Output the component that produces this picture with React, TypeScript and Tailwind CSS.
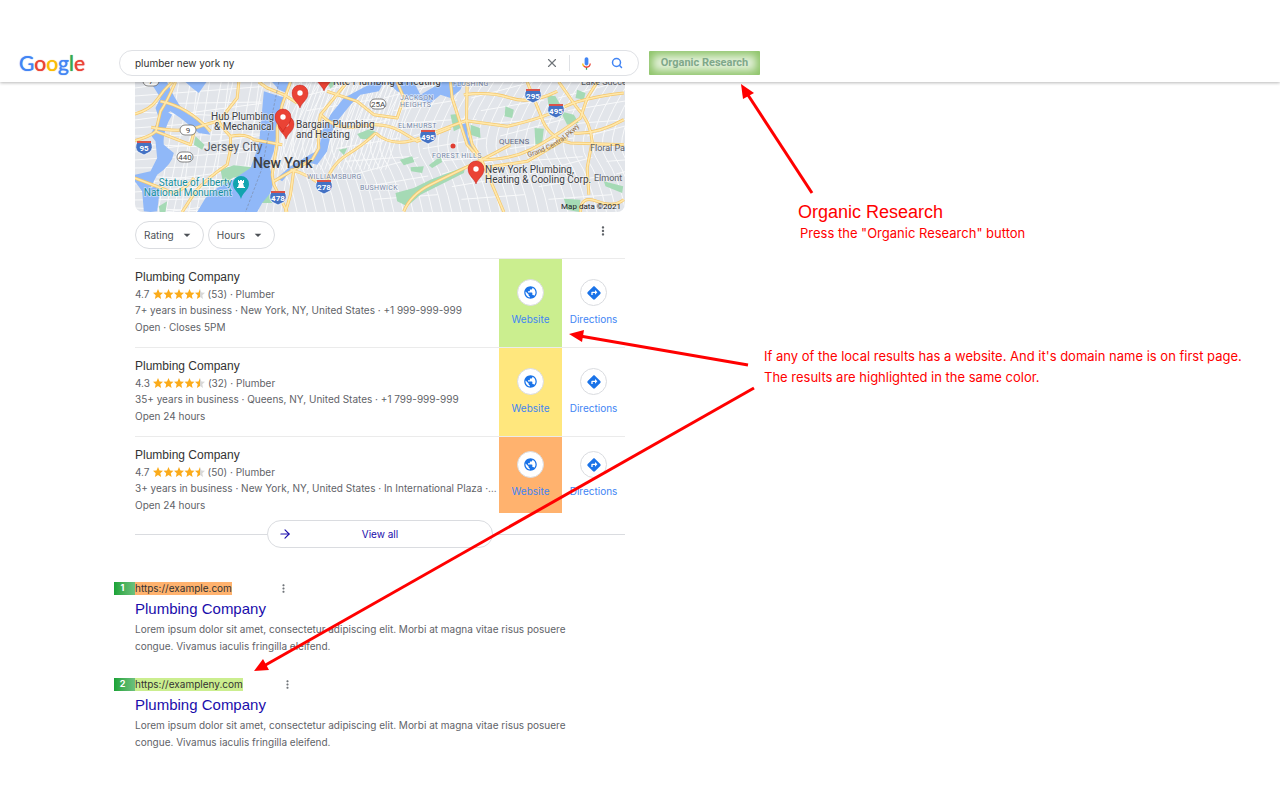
import { ArrowRight, Search, X } from 'lucide-react';
import { MdArrowDropDown, MdDirections, MdMoreVert, MdPublic } from 'react-icons/md';

interface LocalResult {
  rating: string;
  reviews: number;
  details: string;
  hours: string;
  highlight: string;
}

interface SearchResult {
  position: number;
  url: string;
  highlight: string;
  menuGap: string;
}

const localResults: LocalResult[] = [
  {
    rating: '4.7',
    reviews: 53,
    details: '7+ years in business · New York, NY, United States · +1 999-999-999',
    hours: 'Open · Closes 5PM',
    highlight: 'bg-[#cbee8f]',
  },
  {
    rating: '4.3',
    reviews: 32,
    details: '35+ years in business · Queens, NY, United States · +1 799-999-999',
    hours: 'Open 24 hours',
    highlight: 'bg-[#ffe77d]',
  },
  {
    rating: '4.7',
    reviews: 50,
    details: '3+ years in business · New York, NY, United States · In International Plaza ·…',
    hours: 'Open 24 hours',
    highlight: 'bg-[#ffb26e]',
  },
];

const searchResults: SearchResult[] = [
  { position: 1, url: 'https://example.com', highlight: 'bg-[#ffb26e]', menuGap: 'ml-[45px]' },
  { position: 2, url: 'https://exampleny.com', highlight: 'bg-[#cbee8f]', menuGap: 'ml-[38px]' },
];

const STAR = 'M5 0 6.5 3.5 10 3.8 7.3 6.2 8.1 10 5 8 1.9 10 2.7 6.2 0 3.8 3.5 3.5Z';

function Stars() {
  return (
    <svg width="52" height="10" viewBox="0 0 52 10" role="img" aria-label="Rated 4.5 of 5">
      <defs>
        <linearGradient id="half">
          <stop offset="0.5" stopColor="#fbab1a" />
          <stop offset="0.5" stopColor="#d8d8d8" />
        </linearGradient>
      </defs>
      {[0, 1, 2, 3, 4].map((i) => (
        <path key={i} d={STAR} transform={`translate(${i * 10.5} 0)`} fill={i === 4 ? 'url(#half)' : '#fbab1a'} />
      ))}
    </svg>
  );
}

function MicIcon() {
  return (
    <svg width="15" height="15" viewBox="0 0 24 24">
      <path fill="#4285f4" d="M12 15c1.66 0 3-1.31 3-2.97V4.98C15 3.32 13.66 2 12 2S9 3.32 9 4.98v7.05C9 13.69 10.34 15 12 15z" />
      <path fill="#34a853" d="M11 18.08h2V22h-2z" />
      <path fill="#fbbc05" d="M7.05 16.87C5.78 15.59 5 13.83 5 12h2c0 1.45.56 2.42 1.47 3.38v.32l-1.15 1.18z" />
      <path fill="#ea4335" d="M12 16.93a4.97 4.97 0 0 1-3.54-1.55l-1.41 1.49c1.26 1.34 3.02 2.13 4.95 2.13 3.87 0 6.99-2.92 6.99-7h-1.99c0 2.92-2.24 4.93-5 4.93z" />
    </svg>
  );
}

const water = [
  // Newark Bay and the Hackensack
  'M60 12 L110 12 Q130 60 160 100 L215 135 L240 170 L205 165 L150 120 L120 100 L85 120 L75 90 L90 60Z',
  'M100 95 L125 110 Q95 160 100 200 L130 225 Q125 260 80 290 L60 330 L90 320 L80 400 L60 402 L40 400 L35 340 L13 310 L13 290 L60 280 L80 240 L75 190 L60 170Z',
  'M165 12 L228 12 L205 45 L185 30Z',
  // Hudson and the Upper Bay
  'M400 40 L465 60 L445 130 L430 220 L415 260 L430 310 L420 345 L395 375 L380 402 L200 402 L225 360 L260 330 L300 310 L360 270 L385 200 L392 130Z',
  'M425 12 L485 12 L470 45 L445 35Z',
  // East River
  'M730 12 L760 12 L745 40 L690 50 L660 80 L620 130 L600 170 L590 220 L560 260 L520 250 L480 280 L455 310 L440 300 L480 265 L530 235 L565 215 L575 160 L600 110 L640 60Z',
  'M770 12 L850 12 L870 50 L935 12 L1000 12 L990 35 L960 60 L930 50 L900 75 L850 60 L800 40Z',
  'M935 12 L1000 12 L985 40 L945 55Z',
  'M990 140 L1008 135 L1012 175 L1030 215 L1022 220 L1005 180Z',
];

const parks = [
  'M270 275 L310 262 L365 268 L345 290 L305 300 L280 325Z',
  'M195 175 L222 200 L215 215 L190 200Z',
  'M390 375 L415 345 L430 355 L425 375Z',
  'M85 385 L110 370 L105 402 L88 402Z',
  'M590 12 L620 12 L600 32Z',
  'M680 168 L720 152 L740 165 L720 185 L690 182Z',
  'M625 215 L650 210 L640 232Z',
  'M960 110 L980 108 L990 150 L970 160Z',
  'M1020 140 L1048 150 L1050 180 L1020 170Z',
  'M808 245 L845 235 L852 252 L820 262Z',
  'M840 268 L880 265 L875 285 L842 280Z',
  'M895 262 L930 235 L935 252 L905 270Z',
  'M795 345 L850 330 L900 305 L1005 265 L1000 285 L930 320 L870 350 L830 385 L800 370Z',
  'M1125 85 L1150 95 L1145 120 L1122 115Z',
  'M1212 150 L1240 152 L1235 195 L1215 200Z',
  'M1250 50 L1275 55 L1300 100 L1290 120 L1255 90Z',
  'M1290 100 L1330 110 L1345 135 L1310 140Z',
  'M1300 362 L1350 365 L1345 402 L1310 395Z',
  'M1420 310 L1478 325 L1475 345 L1425 325Z',
  'M1340 35 L1365 45 L1360 65 L1335 60Z',
];

const highways = [
  'M13 108 Q60 95 80 65 T125 12',
  'M13 188 Q60 175 76 160 L90 100 Q110 70 135 12',
  'M62 148 Q150 165 200 148 T265 130 L320 60 L325 12',
  'M13 300 L130 345 Q170 330 190 300',
  'M76 160 L180 200 L190 165',
  'M265 130 Q275 150 300 175 Q345 165 370 185 L455 200',
  'M300 175 L300 215 L290 260 Q230 300 195 340 L155 402',
  'M90 70 Q170 85 240 160',
  'M385 12 L410 30 L460 50 L500 75',
  'M480 12 L455 80 L440 150 L440 195 L425 290 L430 320 L470 402',
  'M650 12 L570 110 Q560 160 565 210 L545 245 L490 275 L430 310',
  'M490 275 L480 350 L465 402',
  'M570 110 Q620 160 690 145 T810 160 L860 190 L960 150',
  'M480 275 Q540 290 580 330 Q600 260 650 230 T735 165',
  'M735 165 Q790 215 880 175 L1005 128 L1130 145 Q1240 120 1295 90 T1480 45',
  'M590 40 L680 70 L730 110 L800 120 L820 60 L800 12',
  'M960 12 L965 60 L1010 200 L1055 250 L1085 320 L1120 402',
  'M1010 12 L1008 128 L1025 200 L1055 245',
  'M1055 245 Q1140 245 1200 215 T1350 120 L1370 60 L1400 12',
  'M820 400 Q840 350 900 320 T1055 245 L1140 200',
  'M1190 12 L1230 110 Q1250 180 1320 195 L1480 200',
  'M1285 12 L1340 90 Q1380 130 1385 190 L1370 270 L1375 350',
  'M1330 165 Q1400 170 1480 125',
  'M1350 402 Q1350 350 1400 370 T1480 365',
  'M1000 50 Q1080 40 1140 60 T1280 40',
  'M1055 270 L1190 250 L1310 180',
];

function Streets() {
  const lines = [];
  for (let i = 0; i < 26; i++) {
    const x = 440 + i * 13;
    lines.push(<path key={`a${i}`} d={`M${x} 275 L${x + 90} 12`} />);
  }
  for (let i = 0; i < 38; i++) {
    const x = 500 + i * 29;
    lines.push(<path key={`b${i}`} d={`M${x} 402 Q${x - 20} 300 ${x - 60} 240 T${x + 10} 12`} />);
    lines.push(<path key={`c${i}`} d={`M${x} ${60 + (i % 9) * 38} l190 ${(i % 3) * 18 - 50}`} />);
  }
  for (let i = 0; i < 18; i++) {
    lines.push(<path key={`d${i}`} d={`M${60 + i * 23} 402 l${50 + (i % 4) * 12} -390`} />);
    lines.push(<path key={`e${i}`} d={`M13 ${30 + i * 24} l380 ${(i % 4) * 22 - 50}`} />);
  }
  return <g fill="none" stroke="#f8f9fa" strokeWidth="3">{lines}</g>;
}

function Pin({ x, y }: { x: number; y: number }) {
  return (
    <g transform={`translate(${x} ${y})`}>
      <path d="M0 0C-2-6-8-8-8-15a8 8 0 0 1 16 0C8-8 2-6 0 0Z" fill="#ea4335" stroke="#b31412" strokeWidth="0.4" />
      <circle cy="-15" r="2.7" fill="#fff" />
    </g>
  );
}

function Shield({ x, y, label }: { x: number; y: number; label: string }) {
  return (
    <g transform={`translate(${x} ${y})`}>
      <path d="M-7-5H7Q10 1 6 5L0 8-6 5Q-10 1-7-5Z" fill="#4472c4" stroke="#fff" strokeWidth="0.8" />
      <path d="M-7-6H7V-4H-7Z" fill="#d9534a" />
      <text y="4" textAnchor="middle" className="fill-white text-[8px] font-bold">{label}</text>
    </g>
  );
}

function RouteBadge({ x, y, label }: { x: number; y: number; label: string }) {
  return (
    <g transform={`translate(${x} ${y})`}>
      <rect x="-8" y="-5" width="16" height="10" rx="5" fill="#fff" stroke="#666" strokeWidth="0.8" />
      <text y="3" textAnchor="middle" className="fill-[#444] text-[8px]">{label}</text>
    </g>
  );
}

function LocalMap() {
  return (
    <svg viewBox="0 0 490 130" className="block w-full rounded-b-lg font-[Roboto,sans-serif]" role="img" aria-label="Map of local results">
      <g transform="scale(0.33333) translate(-13.5 -12)">
        <rect x="13" y="12" width="1471" height="392" fill="#e2e5ea" />
        <Streets />
        {parks.map((d) => <path key={d} d={d} fill="#a5dab5" />)}
        {water.map((d) => <path key={d} d={d} fill="#90b8f8" />)}
        <g fill="none" strokeLinejoin="round">
          {highways.map((d) => <path key={d} d={d} stroke="#f5c76b" strokeWidth="9" />)}
          {highways.map((d) => <path key={d} d={d} stroke="#ffe8ab" strokeWidth="5" />)}
        </g>
        <path d="M445 12 L425 110 L395 270 L345 402" fill="none" stroke="#7d8ca8" strokeWidth="2" strokeDasharray="8 5" />
      </g>
      <RouteBadge x={16} y={-1} label="7" />
      <RouteBadge x={53} y={48} label="9" />
      <RouteBadge x={50} y={75} label="440" />
      <RouteBadge x={243} y={22} label="25A" />
      <Shield x={9} y={65} label="95" />
      <Shield x={143} y={115} label="478" />
      <Shield x={189} y={104} label="278" />
      <Shield x={293} y={54} label="495" />
      <Shield x={398} y={13} label="295" />
      <Shield x={421} y={28} label="495" />
      <g className="fill-[#7686a6] text-[7px] tracking-wider" stroke="#fff" strokeOpacity="0.6" strokeWidth="1.5" paintOrder="stroke">
        <text x="318" y="4">FLUSHING</text>
        <text x="265" y="18">JACKSON</text>
        <text x="265" y="25">HEIGHTS</text>
        <text x="263" y="46">ELMHURST</text>
        <text x="297" y="76">FOREST HILLS</text>
        <text x="172" y="97">WILLIAMSBURG</text>
        <text x="225" y="108">BUSHWICK</text>
      </g>
      <text x="364" y="62" className="fill-[#5f6b84] text-[8px]">QUEENS</text>
      <path id="parkway" d="M393 75 Q428 66 448 40" fill="none" />
      <text className="fill-[#8d6a3f] text-[7px]"><textPath href="#parkway">Grand Central Pkwy</textPath></text>
      <g className="fill-[#5c5f66] text-[9px]">
        <text x="446" y="3">Lake Success</text>
        <text x="455" y="69">Floral Pa</text>
        <text x="459" y="99">Elmont</text>
      </g>
      <text x="69" y="69" className="fill-[#555a63] text-[12px]">Jersey City</text>
      <text x="118" y="86" className="fill-[#3c4043] text-[14px] font-medium">New York</text>
      <g className="fill-[#168f9c] text-[10px]" stroke="#fff" strokeOpacity="0.5" strokeWidth="1.5" paintOrder="stroke">
        <text x="97" y="104" textAnchor="end">Statue of Liberty</text>
        <text x="97" y="114" textAnchor="end">National Monument</text>
      </g>
      <path d="M106 117C104 110 98 108 98 102a8 8 0 0 1 16 0C114 108 108 110 106 117Z" fill="#12a4af" />
      <path d="M103 98h1v1h1v-1h2v1h1v-1h1v3h-1l1 4h1v1h-8v-1h1l1-4h-1Z" fill="#fff" />
      <circle cx="318" cy="64" r="2.5" fill="#e03c31" />
      <Pin x={189} y={9} />
      <Pin x={165} y={26} />
      <Pin x={151} y={57} />
      <Pin x={148} y={50} />
      <Pin x={341} y={102} />
      <g className="fill-[#3c4043] text-[10px]" stroke="#fff" strokeOpacity="0.5" strokeWidth="1.5" paintOrder="stroke">
        <text x="198" y="3">Rite Plumbing &amp; Heating</text>
        <text x="139" y="38" textAnchor="end">Hub Plumbing</text>
        <text x="139" y="48" textAnchor="end">&amp; Mechanical</text>
        <text x="161" y="46">Bargain Plumbing</text>
        <text x="161" y="56">and Heating</text>
        <text x="350" y="91">New York Plumbing,</text>
        <text x="350" y="101">Heating &amp; Cooling Corp.</text>
      </g>
      <text x="486" y="127" textAnchor="end" className="fill-[#222] text-[8px]">Map data ©2021</text>
    </svg>
  );
}

function Header() {
  return (
    <header className="relative z-10 bg-white pt-[50px] pb-[6px] shadow-[0_1px_3px_rgba(0,0,0,0.28)]">
      <div className="flex items-center">
        <a
          href="#"
          aria-label="Google"
          className="ml-[19px] w-[100px] font-[Lato,sans-serif] text-[21px] leading-6 [text-shadow:0_0_1px_currentColor]"
        >
          <span className="text-[#4285f4]">G</span>
          <span className="text-[#ea4335]">o</span>
          <span className="text-[#fbbc05]">o</span>
          <span className="text-[#4285f4]">g</span>
          <span className="text-[#34a853]">l</span>
          <span className="text-[#ea4335]">e</span>
        </a>
        <form className="flex h-[26px] w-[520px] items-center rounded-full border border-[#dfe1e5] pr-[15px] pl-[15px]">
          <input
            type="text"
            aria-label="Search"
            defaultValue="plumber new york ny"
            className="min-w-0 flex-1 bg-transparent font-[Inter,Arial,sans-serif] text-[10px] text-[#333] outline-none"
          />
          <button type="button" aria-label="Clear" className="mr-[10px]">
            <X className="size-[14px] text-[#70757a]" strokeWidth={2} />
          </button>
          <span className="h-4 w-px bg-[#dfe1e5]" />
          <button type="button" aria-label="Search by voice" className="ml-[9px]">
            <MicIcon />
          </button>
          <button type="submit" aria-label="Submit search" className="ml-[17px]">
            <Search className="size-[12px] text-[#4285f4]" strokeWidth={3} />
          </button>
        </form>
        <button
          type="button"
          className="ml-[10px] h-6 w-[111px] rounded-[1px] bg-[#e4f1da] font-[Roboto,Arial,sans-serif] text-[11px] font-bold text-[#7fa88a] shadow-[inset_0_0_8px_4px_#8cc367]"
        >
          Organic Research
        </button>
      </div>
    </header>
  );
}

function FilterButton({ label }: { label: string }) {
  return (
    <button type="button" className="flex h-7 items-center gap-[5px] rounded-full border border-[#dadce0] px-2 text-[10px] text-[#4d5156]">
      {label}
      <MdArrowDropDown className="size-4" />
    </button>
  );
}

function LocalRow({ result }: { result: LocalResult }) {
  return (
    <li className="group flex border-t border-[#ebebeb] text-[10px] text-[#5f6368]">
      <div className="min-w-0 flex-1 pt-[10px] pb-3 group-last:pb-0">
        <h3 className="font-['Liberation_Sans',Arial,sans-serif] text-[12px] leading-[17px] text-[#333]">Plumbing Company</h3>
        <p className="flex items-center gap-[3px] leading-4">
          {result.rating}
          <Stars />
          ({result.reviews}) · Plumber
        </p>
        <p className="truncate leading-[17px]">{result.details}</p>
        <p className="leading-4">{result.hours}</p>
      </div>
      <a href="#" className={`flex w-[63px] flex-col items-center justify-center gap-[5px] text-[#4285f4] ${result.highlight}`}>
        <span className="flex size-[27px] items-center justify-center rounded-full border border-[#dadce0] bg-white">
          <MdPublic className="size-[15px] text-[#1a73e8]" />
        </span>
        <span className="leading-4">Website</span>
      </a>
      <a href="#" className="flex w-[63px] flex-col items-center justify-center gap-[5px] text-[#4285f4]">
        <span className="flex size-[27px] items-center justify-center rounded-full border border-[#dadce0] bg-white">
          <MdDirections className="size-4 text-[#1a73e8]" />
        </span>
        <span className="leading-4">Directions</span>
      </a>
    </li>
  );
}

function OrganicResult({ result }: { result: SearchResult }) {
  return (
    <article className="-ml-[21px] grid grid-cols-[21px_1fr]">
      <span className="flex h-[13px] items-center justify-center self-center bg-gradient-to-r from-[#16a336] to-[#6cc07e] pr-1 text-[9px] font-bold text-white">
        {result.position}
      </span>
      <div className="flex h-4 items-center">
        <cite className={`text-[10px] leading-[13px] text-[#333] not-italic ${result.highlight}`}>{result.url}</cite>
        <button type="button" aria-label="About this result" className={result.menuGap}>
          <MdMoreVert className="size-[13px] text-[#70757a]" />
        </button>
      </div>
      <h3 className="col-start-2 mt-[3px] font-['Liberation_Sans',Arial,sans-serif] text-[15px] leading-5 text-[#1a0dab]">
        <a href="#">Plumbing Company</a>
      </h3>
      <p className="col-start-2 mt-[2px] max-w-[450px] text-[10px] leading-[17px] text-[#5f6368]">
        Lorem ipsum dolor sit amet, consectetur adipiscing elit. Morbi at magna vitae risus posuere
        congue. Vivamus iaculis fringilla eleifend.
      </p>
    </article>
  );
}

function Arrows() {
  return (
    <svg className="pointer-events-none absolute top-0 left-0 z-20" width="1280" height="800" viewBox="0 0 1280 800" aria-hidden="true">
      <g stroke="#f00" strokeWidth="3" fill="none">
        <path d="M812 193 L748 95" />
        <path d="M748 365 L580 336" />
        <path d="M754 388 L262 667" />
      </g>
      <g fill="#f00">
        <path d="M741 84 L754 93 L743 99Z" />
        <path d="M569 334 L584 330 L582 342Z" />
        <path d="M254 671 L263 659 L269 670Z" />
      </g>
    </svg>
  );
}

export default function App() {
  return (
    <div className="relative min-h-screen bg-white font-['Liberation_Sans',Arial,sans-serif]">
      <Header />
      <main className="flex items-start">
        <div className="ml-[135px] w-[490px] font-[Inter,Arial,sans-serif]">
          <LocalMap />
          <div className="mt-[9px] flex items-center gap-1">
            <FilterButton label="Rating" />
            <FilterButton label="Hours" />
            <button type="button" aria-label="More options" className="mr-[15px] ml-auto -mt-2">
              <MdMoreVert className="size-[14px] text-[#5f6368]" />
            </button>
          </div>
          <ul className="mt-[9px]">
            {localResults.map((result, idx) => (
              <LocalRow key={idx} result={result} />
            ))}
          </ul>
          <div className="mt-[7px] flex items-center">
            <div className="h-px flex-1 bg-[#dadce0]" />
            <button type="button" className="flex h-7 w-[226px] items-center rounded-full border border-[#dadce0] px-[10px] text-[10px] text-[#1a0dab]">
              <ArrowRight className="size-[14px]" />
              <span className="flex-1 pr-[14px] text-center">View all</span>
            </button>
            <div className="h-px flex-1 bg-[#dadce0]" />
          </div>
          <div className="mt-8 space-y-[21px]">
            {searchResults.map((result) => (
              <OrganicResult key={result.position} result={result} />
            ))}
          </div>
        </div>
        <aside className="ml-[139px] pt-[119px] font-[Inter,Arial,sans-serif] text-[13px] text-[#f00]">
          <h2 className="pl-[34px] font-['Liberation_Sans',Arial,sans-serif] text-[18px] leading-[22px]">Organic Research</h2>
          <p className="pl-9 leading-5">Press the "Organic Research" button</p>
          <p className="mt-[103px] leading-[21px]">
            If any of the local results has a website. And it's domain name is on first page.
            <br />
            The results are highlighted in the same color.
          </p>
        </aside>
      </main>
      <Arrows />
    </div>
  );
}
